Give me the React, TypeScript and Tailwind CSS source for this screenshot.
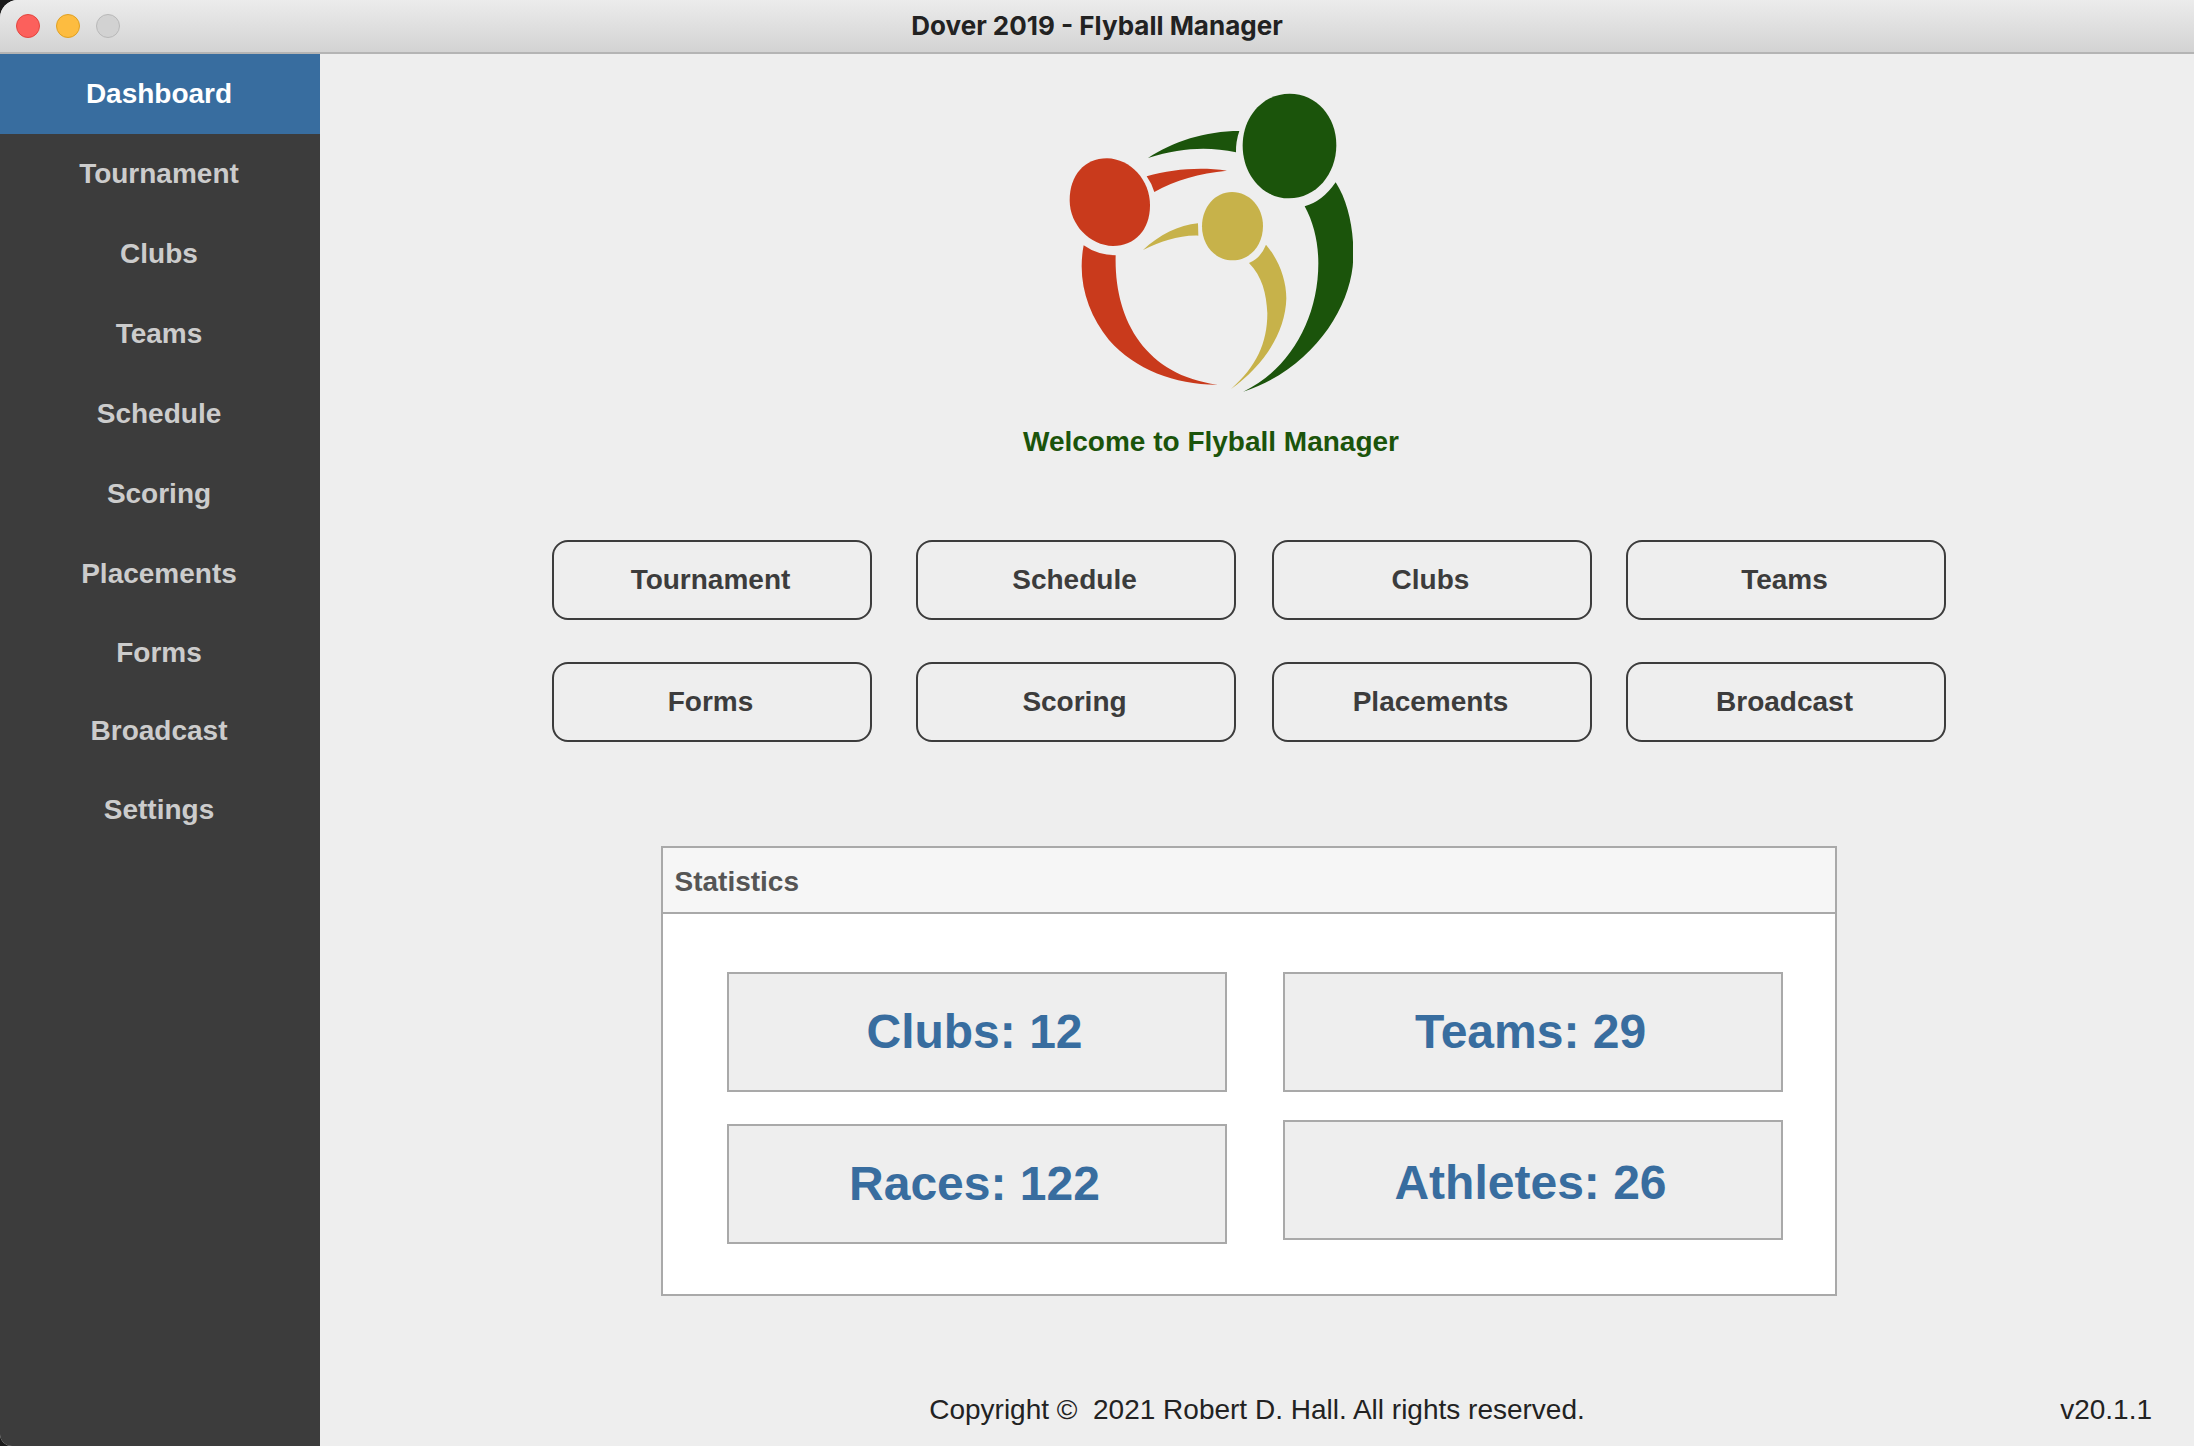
const NAV_ITEMS = [
  { label: "Dashboard", height: "h-20" },
  { label: "Tournament", height: "h-20" },
  { label: "Clubs", height: "h-20" },
  { label: "Teams", height: "h-20" },
  { label: "Schedule", height: "h-20" },
  { label: "Scoring", height: "h-20" },
  { label: "Placements", height: "h-20" },
  { label: "Forms", height: "h-[78px]" },
  { label: "Broadcast", height: "h-[78px]" },
  { label: "Settings", height: "h-20" },
];

const SHORTCUTS = [
  "Tournament",
  "Schedule",
  "Clubs",
  "Teams",
  "Forms",
  "Scoring",
  "Placements",
  "Broadcast",
];

function TitleBar() {
  return (
    <header className="grid h-[54px] grid-cols-[1fr_auto_1fr] items-center border-b-2 border-[#b4b4b4] bg-linear-to-b from-[#ececec] to-[#d3d3d3] px-4">
      <div className="flex gap-4">
        <button type="button" aria-label="Close" className="size-6 rounded-full border border-[#e2463f] bg-[#fc605c]" />
        <button type="button" aria-label="Minimize" className="size-6 rounded-full border border-[#dfa023] bg-[#fdbc40]" />
        <button type="button" aria-label="Zoom" disabled className="size-6 rounded-full border border-[#b8b8b8] bg-[#d2d2d2]" />
      </div>
      <h1 className="font-['Inter',sans-serif] text-[26px] leading-8 font-bold text-[#222222]">
        Dover 2019 - Flyball Manager
      </h1>
    </header>
  );
}

function Sidebar() {
  return (
    <nav className="flex w-80 shrink-0 flex-col bg-[#3c3c3c]">
      {NAV_ITEMS.map(({ label, height }, i) => (
        <button
          key={label}
          type="button"
          aria-current={i === 0 ? "page" : undefined}
          className={`${height} w-full pr-0.5 text-[28px] leading-8 font-bold ${
            i === 0 ? "bg-[#386d9f] text-white" : "text-[#cccccc]"
          }`}
        >
          {label}
        </button>
      ))}
    </nav>
  );
}

function Logo() {
  return (
    <svg viewBox="60 39 852 897" className="h-[299px] w-[284px]" role="img" aria-label="Flyball Manager logo">
      <g fill="#1b540b">
        <path d="M722 41C803 41 862 110 862 195C862 283 801 355 720 355C640 355 581 283 581 197C581 110 642 41 722 41Z" />
        <path d="M297 234C370 185 470 153 571 153Q560 185 561 217C480 200 400 202 297 234Z" />
        <path d="M860 307C902 372 919 470 911 560C895 700 780 870 583 935C720 870 808 720 808 550C808 490 795 430 767 379Q820 365 860 307Z" />
      </g>
      <g fill="#c93a1c">
        <path d="M174 235C245 237 303 300 303 376C303 450 258 498 192 498C122 496 62 435 62 360C62 287 106 235 174 235Z" />
        <path d="M293 289C370 268 450 260 534 272C450 280 380 300 316 336Q308 310 293 289Z" />
        <path d="M104 496Q145 525 200 526C195 715 285 885 506 914C380 915 260 870 180 780C115 700 84 600 104 496Z" />
      </g>
      <g fill="#c7b24a">
        <path d="M549 336C602 336 642 382 642 438C642 496 603 541 551 541C498 541 459 496 459 439C459 382 498 336 549 336Z" />
        <path d="M282 510C330 465 390 435 447 430L448 467C390 465 335 485 282 510Z" />
        <path d="M651 494C690 540 712 600 712 655C710 760 640 860 546 927C622 860 655 790 655 700C652 640 640 590 600 549Q635 535 651 494Z" />
      </g>
    </svg>
  );
}

function Welcome() {
  return (
    <section className="flex flex-col items-center pr-[92px]">
      <Logo />
      <h2 className="mt-[34px] text-[28px] leading-8 font-bold text-[#1b540b]">Welcome to Flyball Manager</h2>
    </section>
  );
}

function Shortcuts() {
  return (
    <section className="mt-[82px] grid w-full max-w-[1394px] grid-cols-[364fr_356fr_354fr_320fr] gap-y-[42px]">
      {SHORTCUTS.map((label) => (
        <button
          key={label}
          type="button"
          className="h-20 w-full max-w-80 rounded-2xl border-2 border-[#3c3c3c] pr-0.5 text-[28px] leading-8 font-bold text-[#3c3c3c]"
        >
          {label}
        </button>
      ))}
    </section>
  );
}

function Stat({ label, value, lowered = false }: { label: string; value: number; lowered?: boolean }) {
  return (
    <p
      className={`flex h-[120px] items-center justify-center border-2 border-[#a9a9a9] bg-[#eeeeee] pr-1 text-5xl font-bold text-[#386d9f] ${
        lowered ? "pt-1.5" : ""
      }`}
    >
      {label}: {value}
    </p>
  );
}

function Statistics() {
  return (
    <section className="mt-[104px] w-full max-w-[1176px] border-2 border-[#a9a9a9] bg-white">
      <h2 className="border-b-2 border-[#a9a9a9] bg-[#f6f6f6] px-3 pt-[18px] pb-3.5 text-[28px] leading-8 font-bold text-[#555555]">
        Statistics
      </h2>
      <div className="grid grid-cols-2 gap-14 pt-[58px] pr-[52px] pb-[50px] pl-16">
        <div className="flex flex-col gap-8">
          <Stat label="Clubs" value={12} />
          <Stat label="Races" value={122} />
        </div>
        <div className="flex flex-col gap-7">
          <Stat label="Teams" value={29} />
          <Stat label="Athletes" value={26} lowered />
        </div>
      </div>
    </section>
  );
}

function Footer() {
  return (
    <footer className="mt-auto grid grid-cols-[1fr_auto_1fr] px-[42px] pb-5 text-[28px] leading-8 text-[#222222]">
      <p className="col-start-2">Copyright ©{"\u00a0 "}2021 Robert D. Hall. All rights reserved.</p>
      <p className="text-right">v20.1.1</p>
    </footer>
  );
}

export default function App() {
  return (
    <div className="min-h-screen bg-[#1a1a1a]">
      <div className="flex min-h-screen flex-col overflow-hidden rounded-tl-[18px] rounded-bl-xl bg-[#eeeeee] font-['Liberation_Sans',Arial,sans-serif]">
        <TitleBar />
        <div className="flex grow">
          <Sidebar />
          <main className="flex grow flex-col pt-[39px]">
            <Welcome />
            <div className="flex flex-col items-center pr-[17px]">
              <Shortcuts />
              <Statistics />
            </div>
            <Footer />
          </main>
        </div>
      </div>
    </div>
  );
}
